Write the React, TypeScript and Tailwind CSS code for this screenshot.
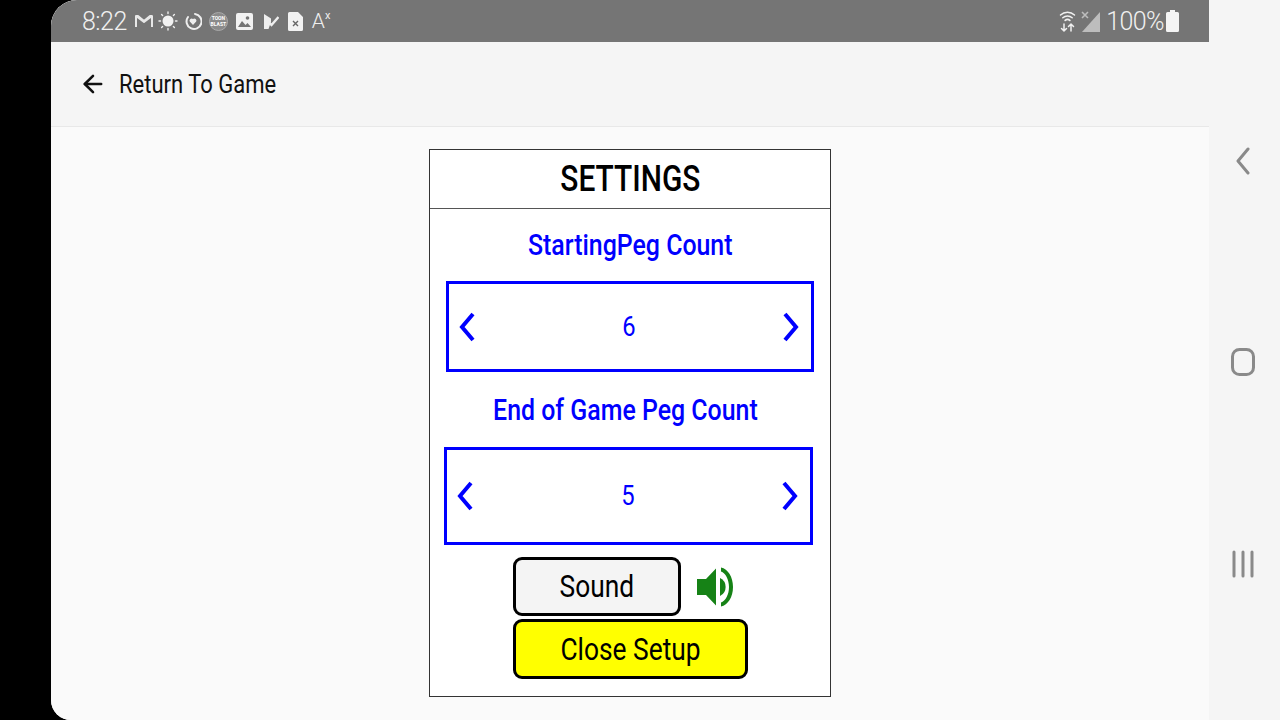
import { ArrowLeft } from 'lucide-react'

const roboto = "font-['Roboto',sans-serif]"

function StatusIcons() {
  return (
    <div className="flex items-center">
      <svg width="20" height="16" viewBox="0 0 20 16" fill="none" stroke="#e8e8e8" strokeWidth="2" className="ml-[7px]">
        <path d="M2 14V3l8 6 8-6v11M2 3h2l6 5 6-5h2" strokeLinejoin="round" />
      </svg>
      <svg width="20" height="20" viewBox="0 0 20 20" className="ml-[4px]" stroke="#eee" strokeWidth="1.4" strokeLinecap="round">
        <circle cx="10" cy="10" r="5.5" fill="#f2f2f2" stroke="none" />
        <path d="M10 1v1.5M10 17.5V19M1 10h1.5M17.5 10H19M3.6 3.6l1 1M15.4 15.4l1 1M3.6 16.4l1-1M15.4 4.6l1-1" />
      </svg>
      <svg width="18" height="18" viewBox="0 0 18 18" className="ml-[6px]" fill="none">
        <path d="M11 2a7.5 7.5 0 1 1-7 3" stroke="#eee" strokeWidth="2" strokeLinecap="round" />
        <path d="M9 13 5.8 9.6a2.1 2.1 0 0 1 3.2-2.6 2.1 2.1 0 0 1 3.2 2.6z" fill="#eee" />
      </svg>
      <div className={`ml-[7px] flex h-[19px] w-[19px] flex-col items-center justify-center rounded-full border border-[#aaa] bg-[#8a8a8a] text-[5px] leading-[6px] font-bold text-white ${roboto}`}>
        <span>TOON</span>
        <span>BLAST</span>
      </div>
      <svg width="17" height="17" viewBox="0 0 17 17" className="ml-[8px]">
        <rect width="17" height="17" rx="2" fill="#f2f2f2" />
        <circle cx="11.5" cy="5" r="1.8" fill="#757575" />
        <path d="M2 14l4-6 3.5 4 2-2 3.5 4z" fill="#757575" />
      </svg>
      <svg width="16" height="17" viewBox="0 0 16 17" className="ml-[10px]">
        <path d="M1 1l7 4.5V9l-2.5 7H1z" fill="#eee" />
        <path d="M5.5 9l3 3 7-8" fill="none" stroke="#eee" strokeWidth="2.4" />
      </svg>
      <svg width="15" height="19" viewBox="0 0 15 19" className="ml-[9px]">
        <path d="M1.5 0H10l5 5v12.5a1.5 1.5 0 0 1-1.5 1.5h-12A1.5 1.5 0 0 1 0 17.500V1.500A1.500 1.500 0 0 1 1.500 0z" fill="#f2f2f2" />
        <path d="M5 9l5 5M10 9l-5 5" stroke="#666" strokeWidth="1.400" />
      </svg>
      <div className={`ml-[9px] flex items-start text-[#eee] ${roboto}`}>
        <span className="text-[21px] leading-[22px] font-light">A</span>
        <span className="text-[11px] leading-[12px]">x</span>
      </div>
    </div>
  )
}

function StatusBar() {
  return (
    <div className="flex h-[42px] items-center justify-between bg-[#757575] pr-[30px] pl-[31px] text-[#f0f0f0]">
      <div className="flex items-center">
        <span className={`text-[25px] leading-none font-light tracking-[-0.5px] ${roboto} inline-block origin-left`}>8:22</span>
        <StatusIcons />
      </div>
      <div className="flex items-center">
        <svg width="17" height="24" viewBox="0 0 17 24" fill="none" stroke="#f0f0f0" strokeLinecap="round">
          <path d="M1.500 6a10 10 0 0 1 14 0M3.800 8.800a7 7 0 0 1 9.400 0" strokeWidth="1.500" />
          <path d="M6.200 11.400a3.500 3.500 0 0 1 4.600 0" strokeWidth="1.800" />
          <path d="M5 15v7M2.500 19.500 5 22l2.500-2.500M12 22v-7M9.500 17.500 12 15l2.500 2.500" strokeWidth="1.500" />
        </svg>
        <svg width="19" height="22" viewBox="0 0 19 22" className="ml-[5px]">
          <path d="M19 2v20H1z" fill="#bdbdbd" />
          <path d="M1 2l6 6M7 2L1 8" stroke="#bdbdbd" strokeWidth="1.600" />
        </svg>
        <span className={`ml-[6px] text-[25px] leading-none font-light tracking-[-0.6px] ${roboto}`}>100%</span>
        <svg width="13" height="22" viewBox="0 0 13 22" className="ml-[2px]">
          <path d="M4 0h5v2h2.500A1.500 1.500 0 0 1 13 3.500v17a1.500 1.500 0 0 1-1.500 1.500h-10A1.500 1.500 0 0 1 0 20.500v-17A1.500 1.500 0 0 1 1.500 2H4z" fill="#f4f4f4" />
        </svg>
      </div>
    </div>
  )
}

function Chevron({ dir }: { dir: 'left' | 'right' }) {
  return (
    <svg width="16" height="30" viewBox="0 0 16 30" fill="none" stroke="#0000ff" strokeWidth="4">
      <path d={dir === 'left' ? 'M14 2 3 15l11 13' : 'M2 2l11 13L2 28'} />
    </svg>
  )
}

function Stepper({ value, className }: { value: number; className: string }) {
  return (
    <div className={`flex items-center justify-between border-[3px] border-[#0000ff] text-[#0000ff] ${className}`}>
      <Chevron dir="left" />
      <span className={`text-[28px] leading-none ${roboto} scale-x-[0.85]`}>{value}</span>
      <Chevron dir="right" />
    </div>
  )
}

function Speaker() {
  return (
    <svg width="37" height="42" viewBox="0 0 37 42" className="ml-[16px]" fill="#168216">
      <path d="M0 13h9L19 2.500v37L9 29H0z" />
      <path d="M23 12a10 10 0 0 1 0 18z" />
      <path d="M24 1.500c7 1.500 12 9.500 12 19.500s-5 18-12 19.500v-4c4.500-1.500 8-8 8-15.500s-3.500-14-8-15.500z" />
    </svg>
  )
}

function SettingsCard() {
  return (
    <div className={`mx-auto mt-[22px] flex h-[548px] w-[402px] flex-col border border-[#333] bg-white ${roboto}`}>
      <div className="flex h-[59px] shrink-0 items-center justify-center border-b border-[#555]">
        <span className="scale-x-[0.83] text-[36px] leading-none font-medium text-black">SETTINGS</span>
      </div>
      <div className="flex h-[72px] shrink-0 items-center justify-center">
        <span className="scale-x-[0.83] text-[30px] leading-none font-medium whitespace-nowrap text-[#0000ff]">StartingPeg Count</span>
      </div>
      <Stepper value={6} className="mr-[16px] ml-[16px] h-[91px] shrink-0 pr-[12px] pl-[10px]" />
      <div className="flex h-[75px] shrink-0 items-center justify-center pr-[10px]">
        <span className="scale-x-[0.83] text-[30px] leading-none font-medium whitespace-nowrap text-[#0000ff]">End of Game Peg Count</span>
      </div>
      <Stepper value={5} className="mr-[17px] ml-[14px] h-[98px] shrink-0 pr-[12px] pl-[10px]" />
      <div className="mt-[12px] ml-[83px] flex flex-col gap-[3px]">
        <div className="flex items-center">
          <button className="flex h-[59px] w-[168px] items-center justify-center rounded-[9px] border-[3px] border-black bg-[#f4f4f4] text-black">
            <span className="scale-x-[0.85] text-[31px] leading-none">Sound</span>
          </button>
          <Speaker />
        </div>
        <button className="flex h-[60px] w-[235px] items-center justify-center rounded-[9px] border-[3px] border-black bg-[#ffff00] text-black">
          <span className="scale-x-[0.85] text-[31px] leading-none whitespace-nowrap">Close Setup</span>
        </button>
      </div>
    </div>
  )
}

function NavBar() {
  return (
    <div className="flex h-full w-[71px] shrink-0 flex-col items-center bg-[#f5f5f5] pt-[147px] pr-[4px]">
      <svg width="16" height="28" viewBox="0 0 16 28" fill="none" stroke="#8a8a8a" strokeWidth="3" strokeLinecap="round" strokeLinejoin="round">
        <path d="M13 2 3 14l10 12" />
      </svg>
      <svg width="24" height="28" viewBox="0 0 24 28" fill="none" stroke="#8a8a8a" strokeWidth="3" className="mt-[173px]">
        <rect x="1.500" y="1.500" width="21" height="25" rx="7" />
      </svg>
      <svg width="22" height="28" viewBox="0 0 22 28" fill="none" stroke="#8a8a8a" strokeWidth="3" strokeLinecap="round" className="mt-[174px]">
        <path d="M2 2v24M11 2v24M20 2v24" />
      </svg>
    </div>
  )
}

export default function App() {
  return (
    <div className="flex h-[720px] w-[1280px] overflow-hidden bg-black">
      <div className="w-[51px] shrink-0" />
      <div className="relative flex w-[1229px] bg-[#f5f5f5] rounded-tl-[26px] rounded-bl-[20px] overflow-hidden">
        <div className="flex w-[1158px] shrink-0 flex-col bg-[#fafafa]">
          <StatusBar />
          <div className={`flex h-[85px] shrink-0 items-center border-b border-[#e8e8e8] bg-[#f5f5f5] pl-[28px] text-[#111] ${roboto}`}>
            <ArrowLeft size={28} strokeWidth={2.2} className="shrink-0" />
            <span className="ml-[12px] inline-block origin-left scale-x-[0.88] text-[25px] leading-none whitespace-nowrap">Return To Game</span>
          </div>
          <SettingsCard />
        </div>
        <NavBar />
      </div>
    </div>
  )
}
